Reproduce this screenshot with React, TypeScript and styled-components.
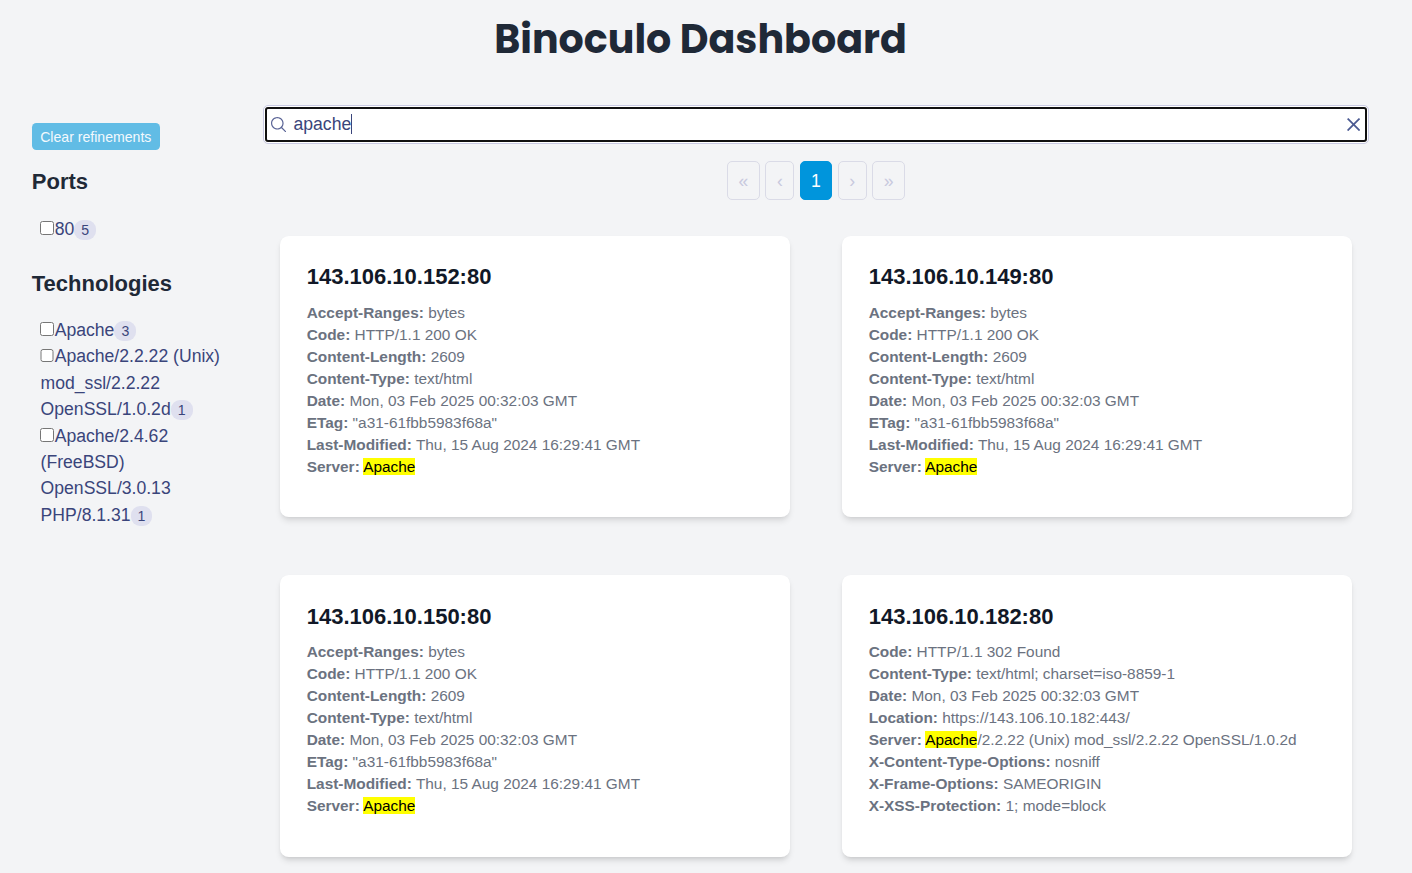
import React from "react";
import styled, { createGlobalStyle } from "styled-components";

const GlobalStyle = createGlobalStyle`
  *, *::before, *::after { box-sizing: border-box; }
  html, body { margin: 0; height: 873px; overflow: hidden; background: #f3f4f6; }
  body { font-family: "Liberation Sans", Arial, sans-serif; font-size: 17.6px; line-height: 26.4px; color: #1f2937; }
  h1, h2, h3, p, ul { margin: 0; padding: 0; }
  ul { list-style: none; }
`;

const Page = styled.div`
  height: 873px;
  overflow: hidden;
`;

const Header = styled.header`
  display: flex;
  justify-content: center;
  height: 105px;
  padding: 9px 11px 0 0;
`;

const PageTitle = styled.h1`
  font-family: Poppins, Inter, sans-serif;
  font-size: 39.6px;
  font-weight: 700;
  line-height: 60px;
  white-space: nowrap;
  height: 60px;
`;

const Layout = styled.div`
  display: flex;
`;

const Sidebar = styled.aside`
  width: 264px;
  flex: none;
  padding: 18px 40px 0 31.8px;
`;

const ClearButton = styled.button`
  display: block;
  width: 128px;
  height: 27px;
  padding: 1px 0 0;
  border: 0;
  border-radius: 4.4px;
  background: #61bce5;
  color: #f3f9fd;
  font: 14.1px/26px "Liberation Sans", Arial, sans-serif;
`;

const FacetTitle = styled.h2`
  font-size: 22px;
  line-height: 31px;
`;

const FacetGroup = styled.section<{ $top: number }>`
  padding-top: ${(p) => p.$top}px;
`;

const FacetList = styled.ul`
  padding: 18.3px 0 0 8.8px;
`;

const FacetItem = styled.li`
  color: #3a457b;
  line-height: 26.4px;
`;

const Checkbox = styled.input`
  width: 13.8px;
  height: 13.8px;
  margin: 0 0.5px 0 -0.2px;
  vertical-align: baseline;
`;

const Count = styled.span`
  display: inline-block;
  height: 20px;
  padding: 0 7px;
  border-radius: 9px;
  background: #dfe0ef;
  font-size: 14.1px;
  line-height: 20px;
  vertical-align: 0;
`;

const Main = styled.main`
  width: 1104px;
  flex: none;
`;

const SearchBox = styled.div`
  display: flex;
  align-items: center;
  height: 39px;
  margin: 0 -1px;
  padding: 0 8.1px 0.6px 7.1px;
  border: 1px solid #c9cae3;
  border-radius: 5px;
  background: #fff;
  color: #3a457b;
  outline: 2px solid #101010;
  outline-offset: -4px;
`;

const Query = styled.span`
  margin-left: 7px;
  line-height: 20px;
  border-right: 1px solid #3a457b;
`;

const SearchIcon = styled.svg`
  width: 15.4px;
  height: 15.4px;
  fill: #5a6496;
`;

const ResetIcon = styled.svg`
  width: 13.2px;
  height: 13.2px;
  margin-left: auto;
  fill: #4b5a92;
`;

const Pagination = styled.nav`
  display: flex;
  justify-content: center;
  gap: 5.7px;
  margin-top: 17px;
`;

const PageLink = styled.span<{ $width: number; $active?: boolean }>`
  width: ${(p) => p.$width}px;
  height: 39px;
  border: 1px solid ${(p) => (p.$active ? "#0095dc" : "#dadbe7")};
  border-radius: 5px;
  background: ${(p) => (p.$active ? "#0095dc" : "transparent")};
  color: ${(p) => (p.$active ? "#fff" : "#c8c9de")};
  line-height: 38px;
  text-align: center;
`;

const Hits = styled.div`
  display: grid;
  grid-template-columns: 510px 510px;
  grid-auto-rows: 281.4px;
  gap: 58px 52px;
  padding: 36px 0 0 16px;
`;

const Card = styled.article`
  padding: 26.4px 26.7px;
  border-radius: 8.8px;
  background: #fff;
  box-shadow: 0 4.4px 6.6px -1.1px rgba(0, 0, 0, 0.1), 0 2.2px 4.4px -2.2px rgba(0, 0, 0, 0.1);
`;

const CardTitle = styled.h3`
  margin-bottom: 8.8px;
  color: #111827;
  font-size: 22px;
  line-height: 30.8px;
`;

const Field = styled.p`
  color: #6b7280;
  font-size: 15.4px;
  line-height: 22px;
  white-space: nowrap;
`;

const Highlight = styled.mark`
  background: #ff0;
  color: #000;
`;

type Facet = { label: string; count: number };
type Hit = { host: string; fields: [string, string][] };

const ports: Facet[] = [{ label: "80", count: 5 }];
const technologies: Facet[] = [
  { label: "Apache", count: 3 },
  { label: "Apache/2.2.22 (Unix) mod_ssl/2.2.22 OpenSSL/1.0.2d", count: 1 },
  { label: "Apache/2.4.62 (FreeBSD) OpenSSL/3.0.13 PHP/8.1.31", count: 1 },
];

const apacheFields: [string, string][] = [
  ["Accept-Ranges", "bytes"],
  ["Code", "HTTP/1.1 200 OK"],
  ["Content-Length", "2609"],
  ["Content-Type", "text/html"],
  ["Date", "Mon, 03 Feb 2025 00:32:03 GMT"],
  ["ETag", '"a31-61fbb5983f68a"'],
  ["Last-Modified", "Thu, 15 Aug 2024 16:29:41 GMT"],
  ["Server", "Apache"],
];

const hits: Hit[] = [
  { host: "143.106.10.152:80", fields: apacheFields },
  { host: "143.106.10.149:80", fields: apacheFields },
  { host: "143.106.10.150:80", fields: apacheFields },
  {
    host: "143.106.10.182:80",
    fields: [
      ["Code", "HTTP/1.1 302 Found"],
      ["Content-Type", "text/html; charset=iso-8859-1"],
      ["Date", "Mon, 03 Feb 2025 00:32:03 GMT"],
      ["Location", "https://143.106.10.182:443/"],
      ["Server", "Apache/2.2.22 (Unix) mod_ssl/2.2.22 OpenSSL/1.0.2d"],
      ["X-Content-Type-Options", "nosniff"],
      ["X-Frame-Options", "SAMEORIGIN"],
      ["X-XSS-Protection", "1; mode=block"],
    ],
  },
];

const pages = [
  { label: "«", width: 32.6 },
  { label: "‹", width: 29 },
  { label: "1", width: 32, active: true },
  { label: "›", width: 29 },
  { label: "»", width: 32.6 },
];

function FacetSection({ title, items, top }: { title: string; items: Facet[]; top: number }) {
  return (
    <FacetGroup $top={top}>
      <FacetTitle>{title}</FacetTitle>
      <FacetList>
        {items.map((item) => (
          <FacetItem key={item.label}>
            <Checkbox type="checkbox" />
            {item.label}
            <Count>{item.count}</Count>
          </FacetItem>
        ))}
      </FacetList>
    </FacetGroup>
  );
}

function FieldValue({ value }: { value: string }) {
  if (!value.startsWith("Apache")) return <>{value}</>;
  return (
    <>
      <Highlight>Apache</Highlight>
      {value.slice(6)}
    </>
  );
}

export default function App() {
  return (
    <Page>
      <GlobalStyle />
      <Header>
        <PageTitle>Binoculo Dashboard</PageTitle>
      </Header>
      <Layout>
        <Sidebar>
          <ClearButton>Clear refinements</ClearButton>
          <FacetSection title="Ports" items={ports} top={16.25} />
          <FacetSection title="Technologies" items={technologies} top={25.65} />
        </Sidebar>
        <Main>
          <SearchBox>
            <SearchIcon viewBox="0 0 40 40">
              <path d="M26.804 29.01c-2.832 2.34-6.465 3.746-10.426 3.746C7.333 32.756 0 25.424 0 16.378 0 7.333 7.333 0 16.378 0c9.046 0 16.378 7.333 16.378 16.378 0 3.96-1.406 7.594-3.746 10.426l10.534 10.534c.607.607.61 1.59-.004 2.202-.61.61-1.597.61-2.202.004L26.804 29.01zm-10.426.627c7.323 0 13.26-5.936 13.26-13.26 0-7.32-5.937-13.257-13.26-13.257C9.056 3.12 3.12 9.056 3.12 16.378c0 7.323 5.936 13.26 13.258 13.26z" />
            </SearchIcon>
            <Query>apache</Query>
            <ResetIcon viewBox="0 0 20 20">
              <path d="M8.114 10L.944 2.83 0 1.885 1.886 0l.943.943L10 8.113l7.17-7.17.944-.943L20 1.886l-.943.943-7.17 7.17 7.17 7.17.943.944L18.114 20l-.943-.943-7.17-7.17-7.17 7.17-.944.943L0 18.114l.943-.943L8.113 10z" />
            </ResetIcon>
          </SearchBox>
          <Pagination>
            {pages.map((p) => (
              <PageLink key={p.label} $width={p.width} $active={p.active}>
                {p.label}
              </PageLink>
            ))}
          </Pagination>
          <Hits>
            {hits.map((hit) => (
              <Card key={hit.host}>
                <CardTitle>{hit.host}</CardTitle>
                {hit.fields.map(([name, value]) => (
                  <Field key={name}>
                    <strong>{name}:</strong> <FieldValue value={value} />
                  </Field>
                ))}
              </Card>
            ))}
          </Hits>
        </Main>
      </Layout>
    </Page>
  );
}
